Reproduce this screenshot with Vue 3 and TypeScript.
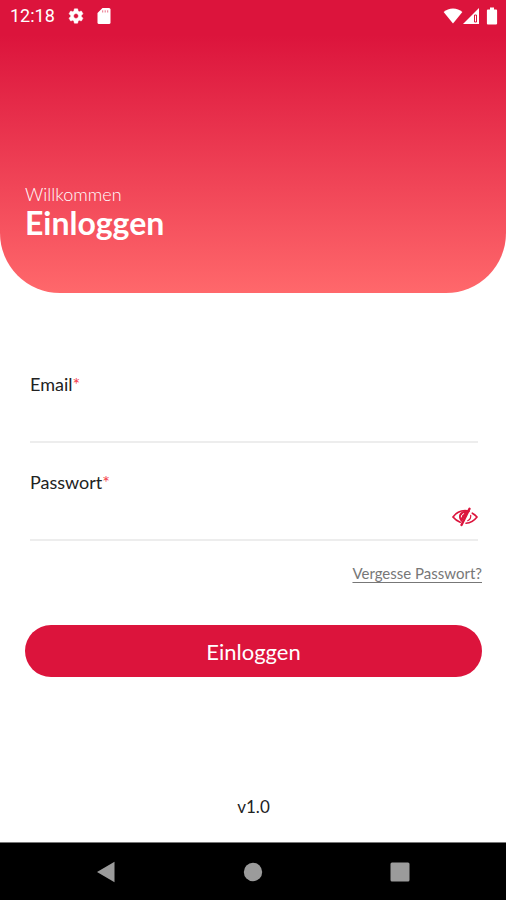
<script setup lang="ts">
import { ref } from 'vue'

const email = ref('')
const password = ref('')
const passwordVisible = ref(false)
</script>

<template>
  <div class="screen">
    <header class="hero">
      <div class="status-bar">
        <div class="status-group">
          <span class="clock">12:18</span>
          <svg class="icon-gear" width="18" height="18" viewBox="0 0 24 24" fill="currentColor" aria-hidden="true">
            <path d="M19.14 12.94c.04-.3.06-.61.06-.94 0-.32-.02-.64-.07-.94l2.03-1.58c.18-.14.23-.41.12-.61l-1.92-3.32c-.12-.22-.37-.29-.59-.22l-2.39.96c-.5-.38-1.03-.7-1.62-.94l-.36-2.54c-.04-.24-.24-.41-.48-.41h-3.84c-.24 0-.43.17-.47.41l-.36 2.54c-.59.24-1.13.57-1.62.94l-2.39-.96c-.22-.08-.47 0-.59.22L2.74 8.87c-.12.21-.08.47.12.61l2.03 1.58c-.05.3-.09.63-.09.94s.02.64.07.94l-2.03 1.58c-.18.14-.23.41-.12.61l1.92 3.32c.12.22.37.29.59.22l2.39-.96c.5.38 1.03.7 1.62.94l.36 2.54c.05.24.24.41.48.41h3.84c.24 0 .44-.17.47-.41l.36-2.54c.59-.24 1.13-.56 1.62-.94l2.39.96c.22.08.47 0 .59-.22l1.92-3.32c.12-.22.07-.47-.12-.61l-2.01-1.58zM12 15.2c-1.8 0-3.200-1.400-3.200-3.200s1.400-3.200 3.200-3.200 3.200 1.400 3.200 3.200-1.400 3.200-3.200 3.200z" stroke="currentColor" stroke-width=".6" />
          </svg>
          <svg width="14" height="16" viewBox="0 0 14 16" fill="currentColor" aria-hidden="true">
            <path d="M5.500 0H12a1.500 1.500 0 0 1 1.500 1.500v13A1.500 1.500 0 0 1 12 16H2a1.500 1.500 0 0 1-1.500-1.500V5z" />
            <path d="M5.700 2.300v2.200M8.200 2.300v2.200M10.700 2.300v2.200" stroke="#dc143c" stroke-width="1" opacity=".6" />
          </svg>
        </div>
        <div class="status-group tight">
          <svg width="20" height="16" viewBox="0 0 20 16" fill="currentColor" aria-hidden="true">
            <path d="M10 15.500.6 4C3.200 1.800 6.400.6 10 .6s6.800 1.200 9.400 3.400z" />
          </svg>
          <svg width="16" height="16" viewBox="0 0 16 16" aria-hidden="true">
            <path d="M0 16 16 0v16z" fill="currentColor" />
            <path d="M11.500 7h2v7h-2z" fill="none" stroke="#dc143c" stroke-width="1" />
          </svg>
          <svg class="icon-battery" width="12" height="18" viewBox="0 0 12 18" fill="currentColor" aria-hidden="true">
            <path d="M4 .5h4v2h2.200c.5 0 .9.400.9.900v13.200c0 .5-.4.900-.9.900H1.800c-.5 0-.9-.4-.9-.9V3.400c0-.5.400-.9.900-.9H4z" />
          </svg>
        </div>
      </div>
      <div class="heading">
        <p class="welcome">Willkommen</p>
        <h1 class="title">Einloggen</h1>
      </div>
    </header>

    <main class="content">
      <form class="form" @submit.prevent>
        <div class="field">
          <label for="email">Email<span class="required">*</span></label>
          <div class="entry">
            <input id="email" v-model="email" type="email" autocomplete="email" />
          </div>
        </div>
        <div class="field">
          <label for="password">Passwort<span class="required">*</span></label>
          <div class="entry">
            <input
              id="password"
              v-model="password"
              :type="passwordVisible ? 'text' : 'password'"
              autocomplete="current-password"
            />
            <button
              class="toggle"
              type="button"
              aria-label="Passwort anzeigen"
              :aria-pressed="passwordVisible"
              @click="passwordVisible = !passwordVisible"
            >
              <svg width="26" height="20" viewBox="0 0 26 20" fill="none" stroke="currentColor" stroke-linecap="round" aria-hidden="true">
                <path d="M8.200 15.200C5 14 2.500 11.800 1 10c2.600-3.600 7-6.300 12-6.300 1.400 0 2.700.2 4 .6" stroke-width="1.700" />
                <path d="M20.300 6.200c1.900 1.100 3.500 2.400 4.700 3.800-2.600 3.400-6.600 6-11 6.300" stroke-width="1.600" />
                <path d="M17.500 1.800 9.500 18" stroke-width="2.400" />
                <path d="M16 4C10.500 3.200 7 6 7 9.500c0 2.300 1 4.200 2.800 5.500z" fill="currentColor" stroke="none" />
                <path d="M9.300 10c0-1.700.9-2.900 2.400-3.300" stroke="#fff" stroke-width="1" />
                <path d="M18.700 8.300c.3 2.500-.8 4.500-3 5.400" stroke-width="1.200" />
              </svg>
            </button>
          </div>
        </div>
        <a class="forgot" href="#">Vergesse Passwort?</a>
        <button class="submit" type="submit">Einloggen</button>
      </form>
      <p class="version">v1.0</p>
    </main>

    <nav class="nav-bar" aria-label="System">
      <button type="button" aria-label="Zurück">
        <svg width="22" height="22" viewBox="0 0 22 22" fill="currentColor" aria-hidden="true"><path d="M2 11 19.500.8v20.400z" /></svg>
      </button>
      <button type="button" aria-label="Startseite">
        <svg width="22" height="22" viewBox="0 0 22 22" fill="currentColor" aria-hidden="true"><circle cx="11" cy="11" r="9.200" /></svg>
      </button>
      <button type="button" aria-label="Übersicht">
        <svg width="22" height="22" viewBox="0 0 22 22" fill="currentColor" aria-hidden="true"><rect x="1.500" y="1.500" width="19" height="19" rx="1.500" /></svg>
      </button>
    </nav>
  </div>
</template>

<style>
body {
  margin: 0;
  background: #fff;
}
</style>

<style scoped>
.screen {
  display: flex;
  flex-direction: column;
  min-height: 100vh;
  font-family: Lato, "Liberation Sans", sans-serif;
  color: #222;
}

button,
input {
  font: inherit;
  margin: 0;
  padding: 0;
  border: 0;
  background: none;
}

button {
  cursor: pointer;
}

svg {
  display: block;
}

p,
h1 {
  margin: 0;
}

.hero {
  padding-bottom: 52px;
  border-radius: 0 0 60px 60px;
  background: linear-gradient(#dc143c 12%, #ff686b);
  color: #fff;
}

.status-bar {
  display: flex;
  align-items: center;
  justify-content: space-between;
  height: 32px;
  padding: 0 8px 0 10px;
}

.status-group {
  display: flex;
  align-items: center;
  gap: 12px;
}

.tight {
  gap: 0;
}

.icon-battery {
  margin-left: 7px;
}

.clock {
  font-family: Roboto, sans-serif;
  font-size: 18px;
  line-height: 24px;
}

.heading {
  padding: 151px 25px 0;
}

.welcome {
  font-size: 18px;
  font-weight: 300;
  line-height: 22px;
}

.title {
  font-size: 32px;
  font-weight: 700;
  line-height: 36px;
}

.content {
  flex: 1;
  display: flex;
  flex-direction: column;
  justify-content: space-between;
  padding: 79px 24px 24px 25px;
}

.form {
  display: flex;
  flex-direction: column;
}

.field {
  margin: 0 4px 0 5px;
}

.field + .field {
  margin-top: 27px;
}

.field label {
  display: block;
  font-size: 18px;
  line-height: 24px;
}

.required {
  color: #f43b47;
}

.entry {
  display: flex;
  align-items: center;
  height: 45px;
  border-bottom: 2px solid #ededed;
}

.entry input {
  flex: 1;
  min-width: 0;
  height: 100%;
  font-size: 18px;
  outline: none;
}

.toggle {
  color: #dc143c;
}

.forgot {
  align-self: flex-end;
  margin-top: 22px;
  font-size: 15px;
  line-height: 20px;
  color: #777;
  text-decoration: underline;
  text-underline-offset: 3px;
}

.submit {
  height: 52px;
  margin-top: 42px;
  border-radius: 26px;
  background: #dc143c;
  color: #fff;
  font-size: 22px;
}

.version {
  font-size: 17px;
  line-height: 22px;
  text-align: center;
}

.nav-bar {
  display: flex;
  align-items: center;
  justify-content: space-around;
  height: 57px;
  padding: 0 33px;
  border-top: 1px solid #777;
  background: #000;
}

.nav-bar button {
  color: #9b9b9b;
}
</style>
